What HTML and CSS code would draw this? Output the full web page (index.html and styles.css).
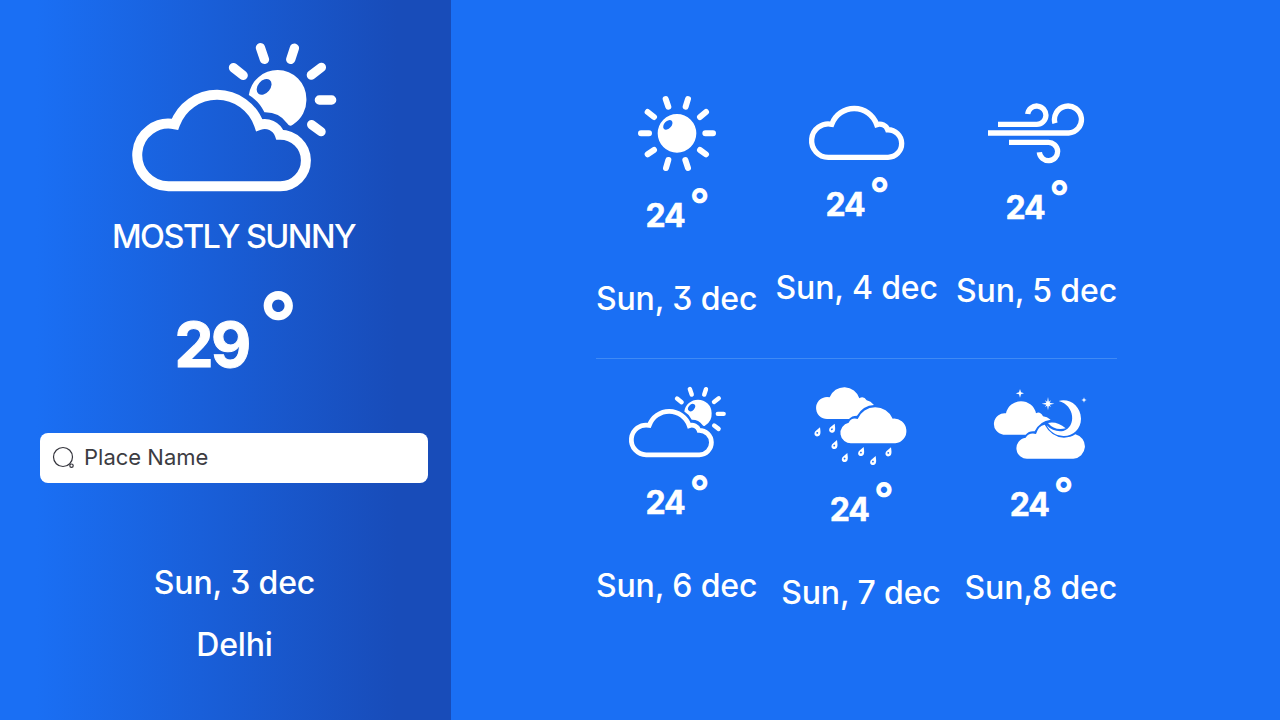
FILE: index.html
```html
<!DOCTYPE html>
<html lang="en">
<head>
<meta charset="utf-8">
<title>Weather</title>
<link rel="stylesheet" href="styles.css">
</head>
<body>
<svg class="defs" width="0" height="0" aria-hidden="true">
  <symbol id="cloud" overflow="visible">
    <path fill="none" stroke="#fff" stroke-width="30" stroke-linejoin="miter" d="M165 283A134 134 0 0 1 418 285A48 48 0 0 1 480 314A77 77 0 0 1 482 469H147A94 94 0 1 1 165 283Z"/>
  </symbol>
  <symbol id="partly" overflow="visible">
    <use href="#cloud"/>
    <path fill="#fff" fill-rule="evenodd" d="M387 195A87 86 0 0 1 474 120A86 86 0 0 1 560 206A86 86 0 0 1 519 284Q509 292 502 280Q478 246 434 247Q418 213 387 195ZM416 191a2.700 1.900 -50 0 0 34 -41a2.700 1.900 -50 0 0 -34 41Z"/>
    <path fill="none" stroke="#fff" stroke-width="28" stroke-linecap="round" d="M341 113L370 136M422 53L434 88M524 54L513 88M605 112L575 135M599 210H636M576 284L604 305"/>
  </symbol>
  <symbol id="drop" overflow="visible">
    <path fill="#fff" fill-rule="evenodd" d="M7 -14C8 -4 12 10 1 13C-9 15 -13 4 -6 -3ZM-3 1a2.500 2.500 0 1 0 3.500 3.500a2.500 2.500 0 1 0 -3.500 -3.500Z"/>
  </symbol>
</svg>
<main class="app">
  <aside class="today">
    <svg class="today-icon" viewBox="36 39 616 447"><use href="#partly"/></svg>
    <h1 class="condition">MOSTLY SUNNY</h1>
    <div class="temp temp-large"><span class="value">29</span><span class="degree">°</span></div>
    <label class="search">
      <svg class="search-icon" viewBox="0 0 24 24"><circle cx="11" cy="11" r="9.5"/><circle cx="19.500" cy="19.700" r="1.7"/></svg>
      <span class="search-text">Place Name</span>
    </label>
    <p class="date today-date">Sun, 3 dec</p>
    <p class="date city">Delhi</p>
  </aside>
  <section class="forecast">
    <div class="row">
      <article class="day">
        <svg class="icon-sun" viewBox="51 30 240 228">
          <path fill="#fff" fill-rule="evenodd" d="M113 145a58 58 0 1 0 116 0a58 58 0 1 0 -116 0ZM132 132a1.800 1.150 -48 0 0 23 -25a1.800 1.150 -48 0 0 -23 25Z"/>
          <path fill="none" stroke="#fff" stroke-width="18" stroke-linecap="round" d="M63 145H87M256 145H279M137 42L145 65M204 42L197 65M83 81L102 96M258 81L240 96M83 208L102 195M258 208L240 195M145 225L138 249M196 225L204 249"/>
        </svg>
        <div class="temp"><span class="value">24</span><span class="degree">°</span></div>
        <p class="date">Sun, 3 dec</p>
      </article>
      <article class="day">
        <svg class="icon-cloud" viewBox="39 63 291 162"><g transform="translate(22.3 -33) scale(.533)"><use href="#cloud"/></g></svg>
        <div class="temp"><span class="value">24</span><span class="degree">°</span></div>
        <p class="date">Sun, 4 dec</p>
      </article>
      <article class="day">
        <svg class="icon-wind" viewBox="39 54 291 180">
          <path fill="none" stroke="#fff" stroke-width="16" d="M69 118H185A27.500 27.500 0 1 0 158 87M39 144H281A40.500 40.500 0 1 0 240 115M102 172H219A27.500 27.500 0 1 1 193 202"/>
        </svg>
        <div class="temp"><span class="value">24</span><span class="degree">°</span></div>
        <p class="date">Sun, 5 dec</p>
      </article>
    </div>
    <hr class="divider">
    <div class="row row-second">
      <article class="day day-partly">
        <svg class="icon-partly" viewBox="24 36 294 213"><g transform="translate(9.5 17) scale(.474)"><use href="#partly"/></g></svg>
        <div class="temp"><span class="value">24</span><span class="degree">°</span></div>
        <p class="date">Sun, 6 dec</p>
      </article>
      <article class="day">
        <svg class="icon-rain" viewBox="42 36 282 234">
          <path fill="#fff" d="M83 132A33 33 0 1 1 89 67A47 47 0 0 1 178 70Q191 62 200 76Q212 78 222 90Q190 91 171 122Q155 122 147 132Z"/>
          <path fill="#fff" d="M155 205A31.400 31.400 0 0 1 146 143Q154 127 173 132A57 57 0 0 1 278 131A37 37 0 1 1 286 205Z"/>
          <use href="#drop" x="53" y="171"/><use href="#drop" x="97" y="160"/><use href="#drop" x="104" y="209"/><use href="#drop" x="135" y="248"/><use href="#drop" x="184" y="230"/><use href="#drop" x="220" y="257"/><use href="#drop" x="266" y="231"/>
        </svg>
        <div class="temp"><span class="value">24</span><span class="degree">°</span></div>
        <p class="date">Sun, 7 dec</p>
      </article>
      <article class="day day-night">
        <svg class="icon-night" viewBox="42 42 282 213">
          <g fill="#fff">
            <path d="M70 179A32 32 0 0 1 78 115A46 46 0 0 1 168 115Q180 108 189 124Q201 125 212 134Q179 138 164 169Q147 167 137 179Z"/>
            <path d="M145 251A31.500 31.500 0 0 1 137 188Q147 172 168 177Q175 152 194 149Q214 186 252 188Q272 188 286 178A37 37 0 0 1 280 251Z"/>
            <path d="M204 144Q231 138 257 160Q224 168 204 144Z"/>
            <path d="M236 78C268 69 302 92 303 131C303 163 278 184 250 183C225 182 208 168 200 151C214 166 232 171 250 168C290 156 285 90 236 78Z"/>
            <path d="M204 66L206.500 80L213 76L209 83L223 86L209 89L213 96L206.500 92L204 106L201.500 92L195 96L199 89L185 86L199 83L195 76L201.500 80Z"/>
            <path d="M120 42L123 52L132 55L123 58L120 68L117 58L107 55L117 52Z"/>
            <path d="M312 67L314 73L320 75L314 77L312 83L310 77L304 75L310 73Z"/>
          </g>
        </svg>
        <div class="temp"><span class="value">24</span><span class="degree">°</span></div>
        <p class="date">Sun,8 dec</p>
      </article>
    </div>
  </section>
</main>
</body>
</html>
```
FILE: styles.css
```css
* { box-sizing: border-box; margin: 0; padding: 0; }
body {
  width: 1280px;
  height: 720px;
  overflow: hidden;
  background: #1a6ff4;
  color: #fff;
  font-family: Inter, "DM Sans", sans-serif;
  font-feature-settings: "cv09";
}
svg { display: block; flex: none; overflow: visible; }
.defs { position: absolute; }
.app { display: flex; height: 720px; }

.today {
  display: flex;
  flex-direction: column;
  align-items: center;
  width: 451px;
  padding: 43px 0 0 18px;
  background: linear-gradient(90deg, #1a6ff4 8%, #184cb9 88%);
}
.today-icon { width: 205px; height: 149px; }
.condition {
  margin: 25px 2px 0 0;
  font-size: 32.500px;
  font-weight: 500;
  line-height: 40px;
  letter-spacing: -1.550px;
  white-space: nowrap;
}
.temp { display: flex; justify-content: center; height: 40px; margin-top: 25px; padding-left: 2px; }
.value { font-size: 32px; font-weight: 700; line-height: 40px; letter-spacing: -1.200px; -webkit-text-stroke: 0.5px #fff; }
.degree { font-size: 44px; font-weight: 680; line-height: 16px; margin-left: 5px; }
.temp-large { height: 80px; margin-top: 48px; padding-left: 3px; }
.temp-large .value { font-size: 62px; line-height: 79px; letter-spacing: -2.400px; -webkit-text-stroke-width: 1px; }
.temp-large .degree { font-size: 84px; line-height: 36px; margin-left: 10px; }

.search {
  display: flex;
  align-items: center;
  width: 388px;
  height: 50px;
  margin: 48px 1px 0 0;
  padding-left: 12px;
  border-radius: 8px;
  background: #fff;
}
.search-icon { width: 24px; height: 24px; fill: none; stroke: #34343c; stroke-width: 1.2; }
.search-text { margin: 0 0 3px 8px; color: #3c3c42; font-size: 22px; line-height: 30px; }

.date { font-size: 32px; font-weight: 500; line-height: 40px; letter-spacing: -0.150px; white-space: nowrap; }
.today-date { margin-top: 80px; }
.city { margin-top: 22px; }

.forecast { width: 521px; margin: 95px 0 0 145px; }
.row { display: flex; justify-content: space-between; align-items: center; }
.day { display: flex; flex-direction: column; align-items: center; }
.day .date { margin-top: 43px; }
.divider { height: 1px; margin: 39px 0 28px; border: 0; background: #3f8af5; }
.day-partly { margin-bottom: 7px; }
.day-night { margin-bottom: 4px; }
.icon-sun { width: 80px; height: 76px; }
.icon-cloud { width: 97px; height: 54px; }
.icon-wind { width: 97px; height: 60px; }
.icon-partly { width: 98px; height: 71px; }
.icon-rain { width: 94px; height: 78px; }
.icon-night { width: 94px; height: 71px; }
```
